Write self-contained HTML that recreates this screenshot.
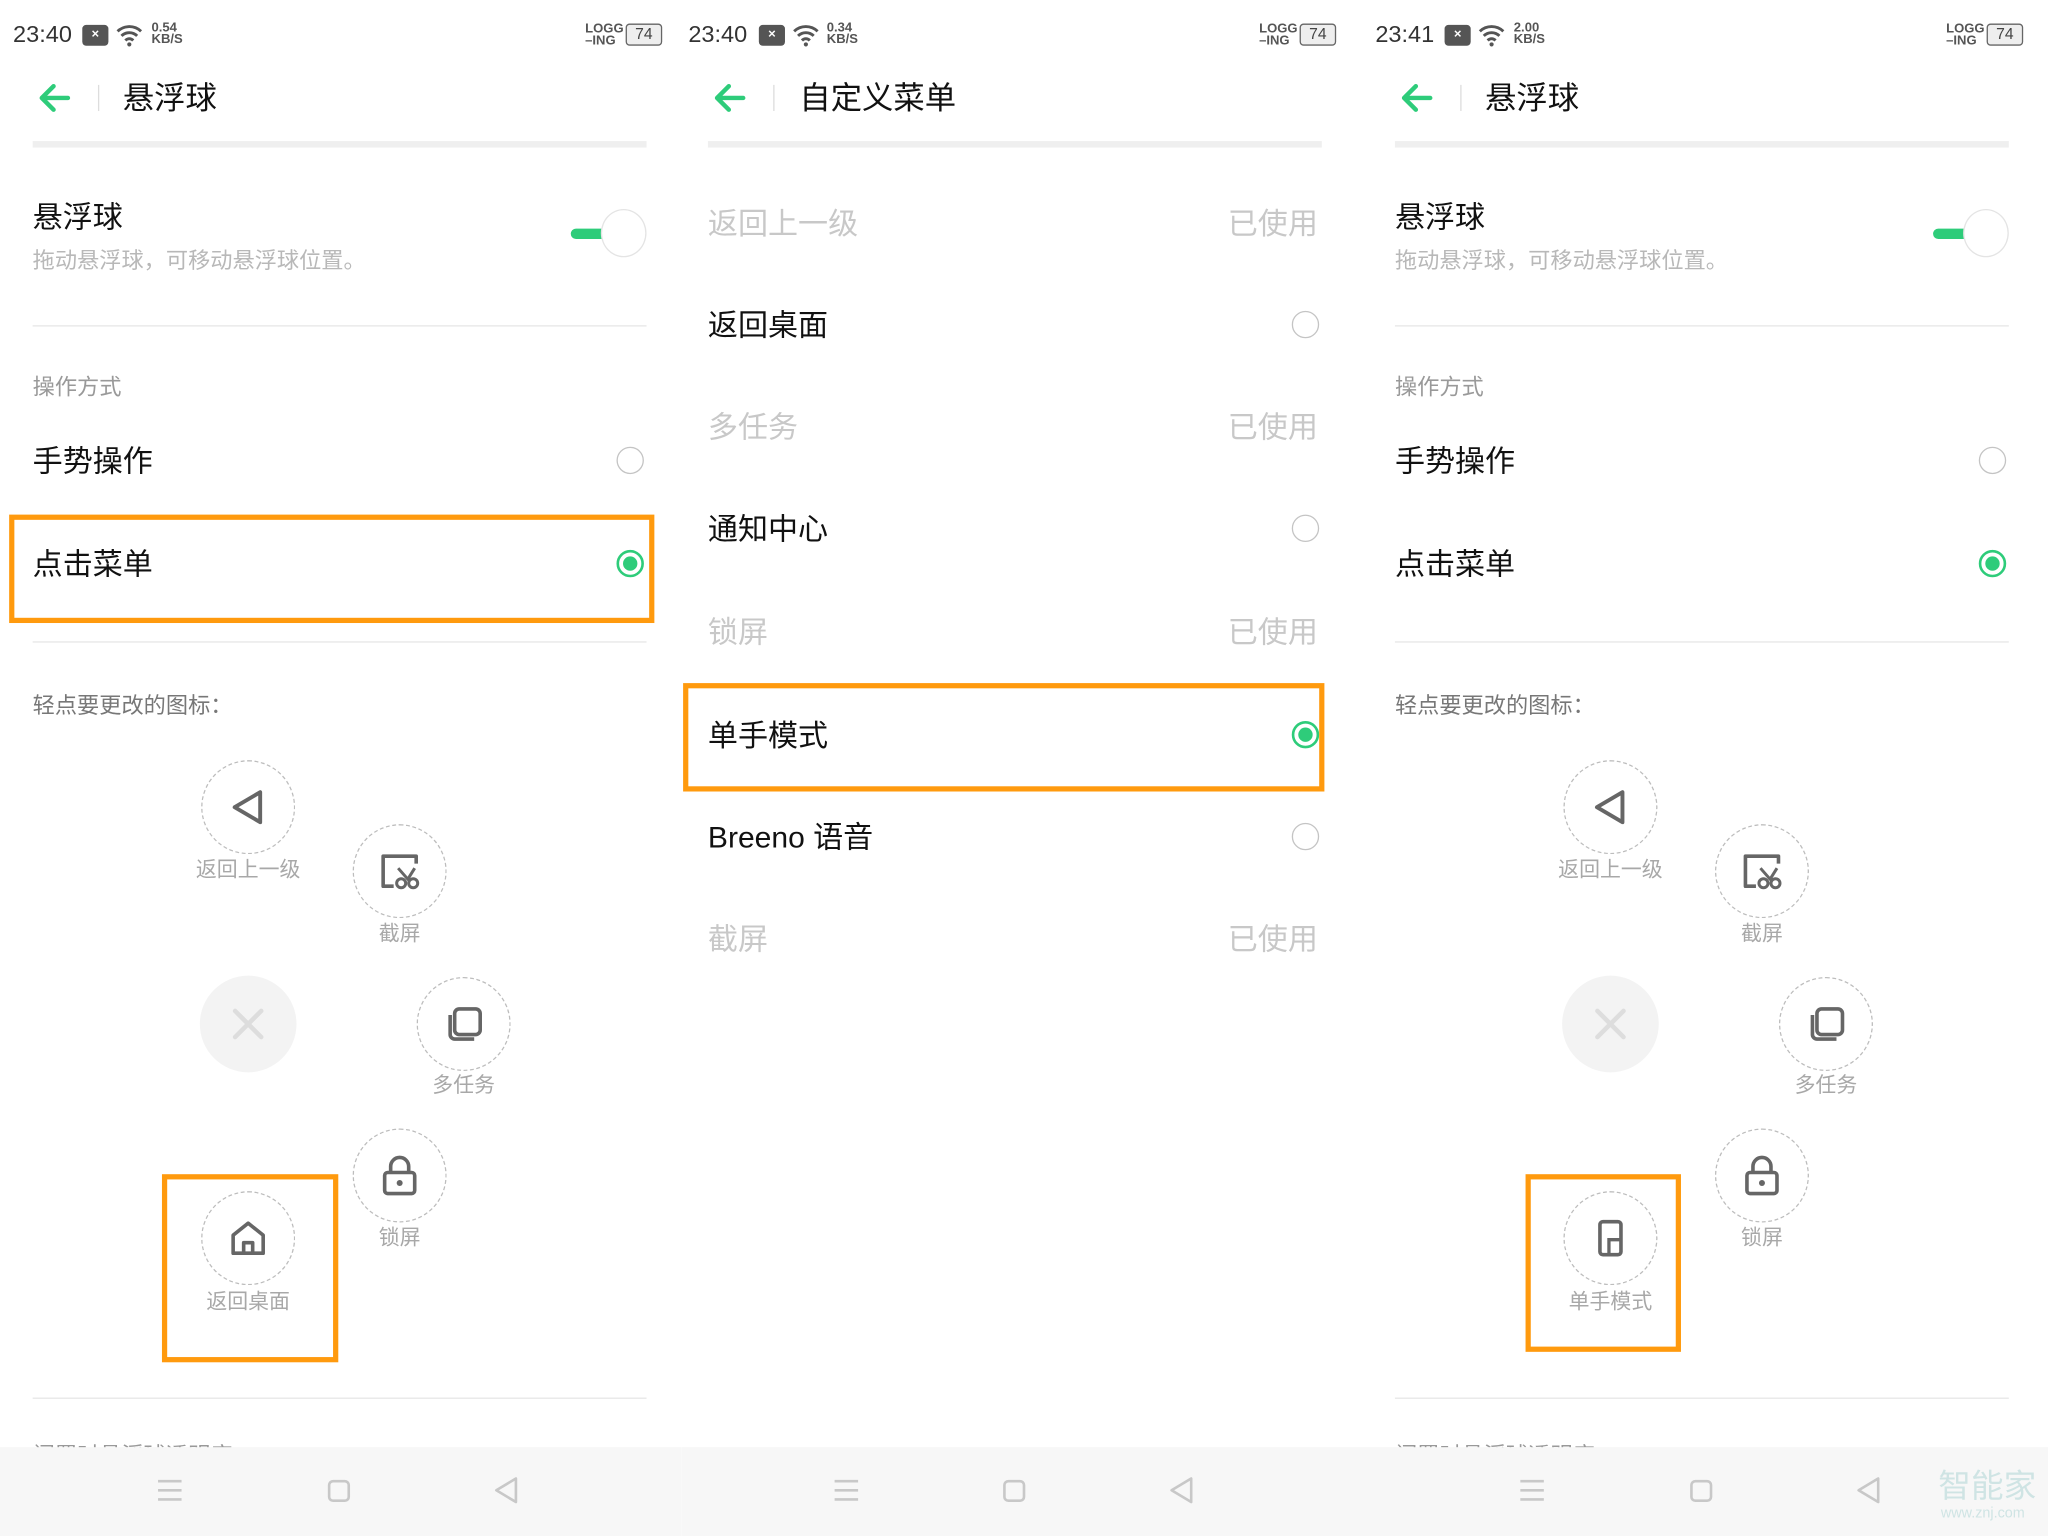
<!DOCTYPE html>
<html><head><meta charset="utf-8"><style>
*{margin:0;padding:0;box-sizing:border-box}
html,body{width:2048px;height:1536px;overflow:hidden;background:#fff}
#s{position:absolute;left:0;top:0;width:1568px;height:1176px;transform:scale(1.306122);transform-origin:0 0;font-family:"Liberation Sans","Noto Sans CJK SC",sans-serif;color:#111}
.a{position:absolute;white-space:nowrap}
.p{position:absolute;top:0;width:522px;height:1176px;overflow:hidden}
.t{font-size:23px;line-height:32px}
.g{color:#c8c8c8}
.sub{font-size:16px;color:#b8b8b8;line-height:22px}
.hr{position:absolute;left:25px;width:470px;height:1px;background:#e6e6e6}
.rad{position:absolute;width:21px;height:21px;border:1.5px solid #c4c4c4;border-radius:50%}
.rs{position:absolute;width:21px;height:21px;border:2px solid #2ecc7a;border-radius:50%}
.rs::after{content:"";position:absolute;left:3px;top:3px;width:11px;height:11px;border-radius:50%;background:#2ecc7a}
.ob{position:absolute;border:4px solid #ff9a0e}
.c{position:absolute;width:72px;height:72px;border:1.6px dashed #bdbdbd;border-radius:50%}
.c svg{position:absolute;left:50%;top:50%;transform:translate(-50%,-50%) scale(1.15)}
.lb{position:absolute;font-size:16px;color:#a8a8a8;width:120px;text-align:center;line-height:20px}
.nav{position:absolute;left:0;top:1108px;width:522px;height:68px;background:#f7f7f7}
.sb{font-size:18px;color:#333;top:16px}
.kb{font-size:10px;line-height:9px;color:#555;font-weight:bold}
</style></head><body><div id="s">

<div class="p" style="left:0">
 <div class="a sb" style="left:10px">23:40</div>
 <div class="a" style="left:63px;top:19px;width:20px;height:16px;background:#555;border-radius:3px;color:#fff;font-size:10px;text-align:center;line-height:16px;font-weight:bold">×</div>
 <svg class="a" style="left:88px;top:18px" width="22" height="18" viewBox="0 0 22 18"><path d="M2 6a13 13 0 0 1 18 0M5 9.5a8.5 8.5 0 0 1 12 0M8 13a4 4 0 0 1 6 0" stroke="#555" stroke-width="2.2" fill="none"/><circle cx="11" cy="16" r="1.6" fill="#555"/></svg>
 <div class="a kb" style="left:116px;top:17px">0.54<br>KB/S</div>
 <div class="a kb" style="left:448px;top:18px">LOGG<br>–ING</div>
 <div class="a" style="left:479px;top:18px;width:28px;height:17px;border:1.5px solid #666;border-radius:3px;font-size:12px;line-height:14px;text-align:center;color:#444;background:#eee">74</div>
 <svg class="a" style="left:28px;top:63px" width="26" height="24" viewBox="0 0 26 24"><path d="M24 12H4M13 3L4 12l9 9" stroke="#2ecc7a" stroke-width="3.4" fill="none" stroke-linecap="round" stroke-linejoin="round"/></svg>
 <div class="a" style="left:75px;top:65px;width:1px;height:20px;background:#ddd"></div>
 <div class="a t" style="left:94px;top:60px;font-size:24px">悬浮球</div>
 <div class="a" style="left:25px;top:108px;width:470px;height:5px;background:#efefef"></div>
 <div class="a t" style="left:25px;top:150px">悬浮球</div>
 <div class="a sub" style="left:25px;top:189px;font-size:17px">拖动悬浮球，可移动悬浮球位置。</div>
 <div class="a" style="left:437px;top:175px;width:28px;height:8px;background:#2ecc7a;border-radius:4px"></div>
 <div class="a" style="left:460px;top:160px;width:35px;height:37px;border:1px solid #e4e4e4;border-radius:50%;background:#fff"></div>
 <div class="hr" style="top:249px"></div>
 <div class="a" style="left:25px;top:282px;font-size:17px;color:#999">操作方式</div>
 <div class="a t" style="left:25px;top:337px">手势操作</div>
 <div class="rad" style="left:472px;top:342px"></div>
 <div class="a t" style="left:25px;top:416px">点击菜单</div>
 <div class="rs" style="left:472px;top:421px"></div>
 <div class="hr" style="top:491px"></div>
 <div class="a" style="left:25px;top:526px;font-size:17px;color:#777">轻点要更改的图标：</div>
 <div class="c" style="left:154px;top:582px"><svg width="30" height="30" viewBox="0 0 30 30"><path d="M6 15L23 5v20z" stroke="#666" stroke-width="2.6" fill="none" stroke-linejoin="round"/></svg></div>
 <div class="lb" style="left:130px;top:657px">返回上一级</div>
 <div class="c" style="left:270px;top:631px"><svg width="32" height="30" viewBox="0 0 32 30"><path d="M12 25H5V5h22v5" stroke="#666" stroke-width="2.4" fill="none" stroke-linejoin="round"/><circle cx="17" cy="23" r="3" stroke="#666" stroke-width="2" fill="none"/><circle cx="25" cy="23" r="3" stroke="#666" stroke-width="2" fill="none"/><path d="M15 13l7 8M26 13l-5 8" stroke="#666" stroke-width="2"/></svg></div>
 <div class="lb" style="left:246px;top:706px">截屏</div>
 <div class="a" style="left:153px;top:747px;width:74px;height:74px;border-radius:50%;background:#f3f3f3"></div>
 <svg class="a" style="left:176px;top:770px" width="28" height="28" viewBox="0 0 28 28"><path d="M4 4l20 20M24 4L4 24" stroke="#ddd" stroke-width="3.5" stroke-linecap="round"/></svg>
 <div class="c" style="left:319px;top:748px"><svg width="30" height="30" viewBox="0 0 30 30"><rect x="9" y="5" width="17" height="17" rx="3" stroke="#666" stroke-width="2.4" fill="none"/><path d="M6 9v13a3 3 0 0 0 3 3h13" stroke="#666" stroke-width="2.4" fill="none"/></svg></div>
 <div class="lb" style="left:295px;top:822px">多任务</div>
 <div class="c" style="left:270px;top:864px"><svg width="30" height="32" viewBox="0 0 30 32"><path d="M9 14V10a6 6 0 0 1 12 0v4" stroke="#666" stroke-width="2.4" fill="none"/><rect x="5" y="14" width="20" height="14" rx="2" stroke="#666" stroke-width="2.4" fill="none"/><circle cx="15" cy="21" r="2" fill="#666"/></svg></div>
 <div class="lb" style="left:246px;top:939px">锁屏</div>
 <div class="c" style="left:154px;top:912px"><svg width="30" height="30" viewBox="0 0 30 30"><path d="M5 25V13l10-8 10 8v12zM12 25v-7h6v7" stroke="#666" stroke-width="2.4" fill="none" stroke-linejoin="round"/></svg></div>
 <div class="lb" style="left:130px;top:988px">返回桌面</div>
 <div class="ob" style="left:124px;top:899px;width:135px;height:144px"></div>
 <div class="hr" style="top:1070px"></div>
 <div class="a" style="left:25px;top:1100px;font-size:17px;color:#999">闲置时悬浮球透明度</div>
 <div class="nav"><svg class="a" style="left:119px;top:24px" width="22" height="18" viewBox="0 0 22 18"><path d="M2 2h18M2 9h18M2 16h18" stroke="#c8c8c8" stroke-width="2"/></svg><div class="a" style="left:251px;top:25px;width:17px;height:17px;border:2px solid #c8c8c8;border-radius:4px"></div><svg class="a" style="left:378px;top:22px" width="20" height="22" viewBox="0 0 20 22"><path d="M2 11L17 2v18z" stroke="#c8c8c8" stroke-width="2" fill="none" stroke-linejoin="round"/></svg></div>
</div>
<div class="ob" style="left:7px;top:394px;width:494px;height:83px"></div>

<div class="p" style="left:522px">
 <div class="a sb" style="left:5px">23:40</div>
 <div class="a" style="left:59px;top:19px;width:20px;height:16px;background:#555;border-radius:3px;color:#fff;font-size:10px;text-align:center;line-height:16px;font-weight:bold">×</div>
 <svg class="a" style="left:84px;top:18px" width="22" height="18" viewBox="0 0 22 18"><path d="M2 6a13 13 0 0 1 18 0M5 9.5a8.5 8.5 0 0 1 12 0M8 13a4 4 0 0 1 6 0" stroke="#555" stroke-width="2.2" fill="none"/><circle cx="11" cy="16" r="1.6" fill="#555"/></svg>
 <div class="a kb" style="left:111px;top:17px">0.34<br>KB/S</div>
 <div class="a kb" style="left:442px;top:18px">LOGG<br>–ING</div>
 <div class="a" style="left:473px;top:18px;width:28px;height:17px;border:1.5px solid #666;border-radius:3px;font-size:12px;line-height:14px;text-align:center;color:#444;background:#eee">74</div>
 <svg class="a" style="left:23px;top:63px" width="26" height="24" viewBox="0 0 26 24"><path d="M24 12H4M13 3L4 12l9 9" stroke="#2ecc7a" stroke-width="3.4" fill="none" stroke-linecap="round" stroke-linejoin="round"/></svg>
 <div class="a" style="left:70px;top:65px;width:1px;height:20px;background:#ddd"></div>
 <div class="a t" style="left:90px;top:60px;font-size:24px">自定义菜单</div>
 <div class="a" style="left:20px;top:108px;width:470px;height:5px;background:#efefef"></div>
 <div class="a t g" style="left:20px;top:155px">返回上一级</div><div class="a t g" style="left:418px;top:155px">已使用</div>
 <div class="a t" style="left:20px;top:233px">返回桌面</div><div class="rad" style="left:467px;top:238px"></div>
 <div class="a t g" style="left:20px;top:311px">多任务</div><div class="a t g" style="left:418px;top:311px">已使用</div>
 <div class="a t" style="left:20px;top:389px">通知中心</div><div class="rad" style="left:467px;top:394px"></div>
 <div class="a t g" style="left:20px;top:468px">锁屏</div><div class="a t g" style="left:418px;top:468px">已使用</div>
 <div class="a t" style="left:20px;top:547px">单手模式</div><div class="rs" style="left:467px;top:552px"></div>
 <div class="ob" style="left:1px;top:523px;width:491px;height:83px"></div>
 <div class="a t" style="left:20px;top:625px">Breeno 语音</div><div class="rad" style="left:467px;top:630px"></div>
 <div class="a t g" style="left:20px;top:703px">截屏</div><div class="a t g" style="left:418px;top:703px">已使用</div>
 <div class="nav"><svg class="a" style="left:115px;top:24px" width="22" height="18" viewBox="0 0 22 18"><path d="M2 2h18M2 9h18M2 16h18" stroke="#c8c8c8" stroke-width="2"/></svg><div class="a" style="left:246px;top:25px;width:17px;height:17px;border:2px solid #c8c8c8;border-radius:4px"></div><svg class="a" style="left:373px;top:22px" width="20" height="22" viewBox="0 0 20 22"><path d="M2 11L17 2v18z" stroke="#c8c8c8" stroke-width="2" fill="none" stroke-linejoin="round"/></svg></div>
</div>

<div class="p" style="left:1043px;width:525px">
 <div class="a sb" style="left:10px">23:41</div>
 <div class="a" style="left:63px;top:19px;width:20px;height:16px;background:#555;border-radius:3px;color:#fff;font-size:10px;text-align:center;line-height:16px;font-weight:bold">×</div>
 <svg class="a" style="left:88px;top:18px" width="22" height="18" viewBox="0 0 22 18"><path d="M2 6a13 13 0 0 1 18 0M5 9.5a8.5 8.5 0 0 1 12 0M8 13a4 4 0 0 1 6 0" stroke="#555" stroke-width="2.2" fill="none"/><circle cx="11" cy="16" r="1.6" fill="#555"/></svg>
 <div class="a kb" style="left:116px;top:17px">2.00<br>KB/S</div>
 <div class="a kb" style="left:447px;top:18px">LOGG<br>–ING</div>
 <div class="a" style="left:478px;top:18px;width:28px;height:17px;border:1.5px solid #666;border-radius:3px;font-size:12px;line-height:14px;text-align:center;color:#444;background:#eee">74</div>
 <svg class="a" style="left:28px;top:63px" width="26" height="24" viewBox="0 0 26 24"><path d="M24 12H4M13 3L4 12l9 9" stroke="#2ecc7a" stroke-width="3.4" fill="none" stroke-linecap="round" stroke-linejoin="round"/></svg>
 <div class="a" style="left:75px;top:65px;width:1px;height:20px;background:#ddd"></div>
 <div class="a t" style="left:94px;top:60px;font-size:24px">悬浮球</div>
 <div class="a" style="left:25px;top:108px;width:470px;height:5px;background:#efefef"></div>
 <div class="a t" style="left:25px;top:150px">悬浮球</div>
 <div class="a sub" style="left:25px;top:189px;font-size:17px">拖动悬浮球，可移动悬浮球位置。</div>
 <div class="a" style="left:437px;top:175px;width:28px;height:8px;background:#2ecc7a;border-radius:4px"></div>
 <div class="a" style="left:460px;top:160px;width:35px;height:37px;border:1px solid #e4e4e4;border-radius:50%;background:#fff"></div>
 <div class="hr" style="top:249px"></div>
 <div class="a" style="left:25px;top:282px;font-size:17px;color:#999">操作方式</div>
 <div class="a t" style="left:25px;top:337px">手势操作</div>
 <div class="rad" style="left:472px;top:342px"></div>
 <div class="a t" style="left:25px;top:416px">点击菜单</div>
 <div class="rs" style="left:472px;top:421px"></div>
 <div class="hr" style="top:491px"></div>
 <div class="a" style="left:25px;top:526px;font-size:17px;color:#777">轻点要更改的图标：</div>
 <div class="c" style="left:154px;top:582px"><svg width="30" height="30" viewBox="0 0 30 30"><path d="M6 15L23 5v20z" stroke="#666" stroke-width="2.6" fill="none" stroke-linejoin="round"/></svg></div>
 <div class="lb" style="left:130px;top:657px">返回上一级</div>
 <div class="c" style="left:270px;top:631px"><svg width="32" height="30" viewBox="0 0 32 30"><path d="M12 25H5V5h22v5" stroke="#666" stroke-width="2.4" fill="none" stroke-linejoin="round"/><circle cx="17" cy="23" r="3" stroke="#666" stroke-width="2" fill="none"/><circle cx="25" cy="23" r="3" stroke="#666" stroke-width="2" fill="none"/><path d="M15 13l7 8M26 13l-5 8" stroke="#666" stroke-width="2"/></svg></div>
 <div class="lb" style="left:246px;top:706px">截屏</div>
 <div class="a" style="left:153px;top:747px;width:74px;height:74px;border-radius:50%;background:#f3f3f3"></div>
 <svg class="a" style="left:176px;top:770px" width="28" height="28" viewBox="0 0 28 28"><path d="M4 4l20 20M24 4L4 24" stroke="#ddd" stroke-width="3.5" stroke-linecap="round"/></svg>
 <div class="c" style="left:319px;top:748px"><svg width="30" height="30" viewBox="0 0 30 30"><rect x="9" y="5" width="17" height="17" rx="3" stroke="#666" stroke-width="2.4" fill="none"/><path d="M6 9v13a3 3 0 0 0 3 3h13" stroke="#666" stroke-width="2.4" fill="none"/></svg></div>
 <div class="lb" style="left:295px;top:822px">多任务</div>
 <div class="c" style="left:270px;top:864px"><svg width="30" height="32" viewBox="0 0 30 32"><path d="M9 14V10a6 6 0 0 1 12 0v4" stroke="#666" stroke-width="2.4" fill="none"/><rect x="5" y="14" width="20" height="14" rx="2" stroke="#666" stroke-width="2.4" fill="none"/><circle cx="15" cy="21" r="2" fill="#666"/></svg></div>
 <div class="lb" style="left:246px;top:939px">锁屏</div>
 <div class="c" style="left:154px;top:912px"><svg width="30" height="30" viewBox="0 0 30 30"><rect x="8" y="4" width="14" height="22" rx="2" stroke="#666" stroke-width="2.4" fill="none"/><path d="M14 26V16h8" stroke="#666" stroke-width="2.2" fill="none"/></svg></div>
 <div class="lb" style="left:130px;top:988px">单手模式</div>
 <div class="ob" style="left:125px;top:899px;width:119px;height:136px"></div>
 <div class="hr" style="top:1070px"></div>
 <div class="a" style="left:25px;top:1100px;font-size:17px;color:#999">闲置时悬浮球透明度</div>
 <div class="nav" style="width:525px"><svg class="a" style="left:119px;top:24px" width="22" height="18" viewBox="0 0 22 18"><path d="M2 2h18M2 9h18M2 16h18" stroke="#c8c8c8" stroke-width="2"/></svg><div class="a" style="left:251px;top:25px;width:17px;height:17px;border:2px solid #c8c8c8;border-radius:4px"></div><svg class="a" style="left:378px;top:22px" width="20" height="22" viewBox="0 0 20 22"><path d="M2 11L17 2v18z" stroke="#c8c8c8" stroke-width="2" fill="none" stroke-linejoin="round"/></svg>
  <div class="a" style="left:441px;top:16px;font-size:25px;color:#cfe4e4;line-height:28px">智能家</div>
  <div class="a" style="left:443px;top:45px;font-size:11px;color:#cfe4e4">www.znj.com</div></div>
</div>
</div></body></html>
